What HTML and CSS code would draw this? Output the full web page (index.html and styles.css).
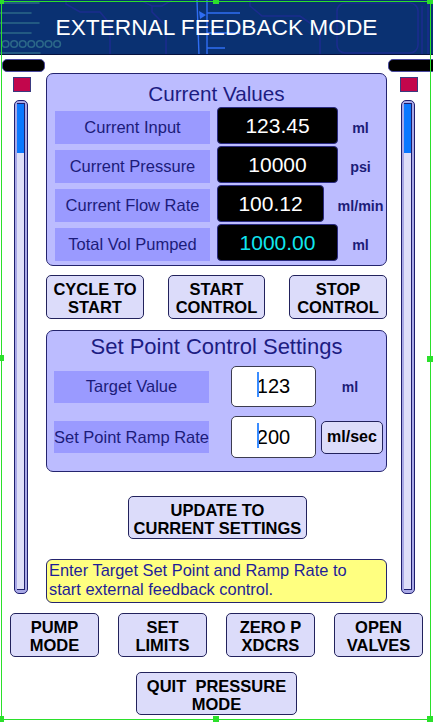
FILE: index.html
```html
<!DOCTYPE html>
<html lang="en">
<head>
<meta charset="utf-8">
<title>External Feedback Mode</title>
<link rel="stylesheet" href="styles.css">
</head>
<body>
<div class="screen">
  <header class="titlebar">
    <svg class="circuit" viewBox="0 0 433 55" width="433" height="55" aria-hidden="true">
      <g fill="none" stroke="#2b6788" stroke-width="1.6" stroke-linecap="round">
        <path d="M-2 3H39M-2 13H31M-2 23H39M-2 33H31M-2 53H40"/>
        <circle cx="5.5" cy="44" r="3.3"/>
        <circle cx="14.1" cy="44" r="3.3"/>
        <circle cx="22.7" cy="44" r="3.3"/>
        <circle cx="31.3" cy="44" r="3.3"/>
        <circle cx="39.9" cy="44" r="3.3"/>
        <circle cx="48.5" cy="44" r="3.3"/>
        <circle cx="57.1" cy="44" r="3.3"/>
      </g>
      <g fill="none" stroke="#1b2c8e" stroke-width="1.6">
        <path d="M66 0V4L80 12H100L110 24V55"/>
        <path d="M140 0L152 6H162L172 0"/>
        <path d="M152 6V12L166 26V55"/>
        <path d="M250 0V6L262 16H300L320 30V55"/>
        <rect x="337" y="3" width="81" height="50" rx="8"/>
        <path d="M422 6V55M428 0V55"/>
      </g>
      <g stroke="#2f6df2" stroke-width="1.4" fill="none">
        <path d="M197 0L199 55M207 0V55M207 13H240M207 33H240M207 48H225"/>
      </g>
      <path d="M199 11L206 15L200 19Z" fill="#2f6df2"/>
    </svg>
    <h1>EXTERNAL FEEDBACK MODE</h1>
  </header>

  <div class="body">
    <aside class="side side-left">
      <div class="pill"></div>
      <div class="led"></div>
      <div class="tube"><div class="track"><div class="fill" style="height:49px"></div></div></div>
    </aside>

    <main class="center">
      <section class="panel values">
        <h2 class="panel-title">Current Values</h2>
        <div class="rows">
          <div class="vrow">
            <div class="label">Current Input</div>
            <div class="value">123.45</div>
            <div class="unit">ml</div>
          </div>
          <div class="vrow">
            <div class="label">Current Pressure</div>
            <div class="value">10000</div>
            <div class="unit">psi</div>
          </div>
          <div class="vrow">
            <div class="label">Current Flow Rate</div>
            <div class="value narrow">100.12</div>
            <div class="unit">ml/min</div>
          </div>
          <div class="vrow">
            <div class="label">Total Vol Pumped</div>
            <div class="value cyan">1000.00</div>
            <div class="unit">ml</div>
          </div>
        </div>
      </section>

      <div class="actions">
        <button class="btn act">CYCLE TO<br>START</button>
        <button class="btn act mid">START<br>CONTROL</button>
        <button class="btn act">STOP<br>CONTROL</button>
      </div>

      <section class="panel setpoint">
        <h2 class="panel-title big">Set Point Control Settings</h2>
        <div class="srow first">
          <div class="label slabel">Target Value</div>
          <div class="input"><span class="caret"></span>123</div>
          <div class="sunit">ml</div>
        </div>
        <div class="srow second">
          <div class="label slabel">Set Point Ramp Rate</div>
          <div class="input"><span class="caret"></span>200</div>
          <button class="btn small">ml/sec</button>
        </div>
      </section>

      <button class="btn update">UPDATE TO<br>CURRENT SETTINGS</button>

      <div class="note">Enter Target Set Point and Ramp Rate to<br>start external feedback control.</div>
    </main>

    <aside class="side side-right">
      <div class="pill"></div>
      <div class="led"></div>
      <div class="tube"><div class="track"><div class="fill" style="height:49px"></div></div></div>
    </aside>
  </div>

  <div class="bottom-row">
    <button class="btn mode">PUMP<br>MODE</button>
    <button class="btn mode">SET<br>LIMITS</button>
    <button class="btn mode">ZERO P<br>XDCRS</button>
    <button class="btn mode">OPEN<br>VALVES</button>
  </div>
  <div class="quit-row">
    <button class="btn quit">QUIT&nbsp; PRESSURE<br>MODE</button>
  </div>

  <div class="selection">
    <div class="sel-frame"></div>
    <span class="handle h-tl"></span>
    <span class="handle h-tm"></span>
    <span class="handle h-tr"></span>
    <span class="handle h-ml"></span>
    <span class="handle h-mr"></span>
    <span class="handle h-bl"></span>
    <span class="handle h-bm"></span>
    <span class="handle h-br"></span>
  </div>
</div>
</body>
</html>
```

FILE: styles.css
```css
* { box-sizing: border-box; margin: 0; padding: 0; }
html, body { width: 433px; height: 723px; overflow: hidden; background: #fff; }
body { font-family: "Liberation Sans", Arial, sans-serif; }

.screen { position: relative; width: 433px; height: 723px; background: #fff; overflow: hidden; }

/* header */
.titlebar {
  position: relative;
  height: 55px;
  background: #0a3172;
  border-bottom: 1px solid #06123f;
  display: flex;
  align-items: center;
  justify-content: center;
  overflow: hidden;
}
.circuit { position: absolute; left: 0; top: 0; width: 433px; height: 55px; }
.titlebar h1 {
  position: relative;
  font-weight: normal;
  font-size: 22.7px;
  line-height: 1;
  color: #fff;
}

/* three columns */
.body {
  display: grid;
  grid-template-columns: 46px 341px 46px;
  height: 548px;
}
.side { display: flex; flex-direction: column; align-items: flex-start; }
.pill {
  margin: 4px 0 0 2px;
  width: 43px;
  height: 13px;
  background: #000;
  border: 1px solid #4a4aa0;
  border-radius: 5px;
}
.side-right .pill { margin-left: 1px; width: 50px; }
.led {
  margin: 5px 0 0 13px;
  width: 18px;
  height: 15px;
  background: #c2064c;
  border: 1px solid #3a3a80;
}
.tube {
  margin: 8px 0 0 14px;
  width: 14px;
  height: 494px;
  border: 1px solid #1e1e6e;
  border-radius: 5px;
  background: #a9a9e6;
  padding: 2px 2px 3px 2px;
}
.side-right .tube { margin-left: 14px; }
.track {
  height: 100%;
  background: #dedef8;
  border-top: 1px solid #1e1e6e;
  border-bottom: 1px solid #1e1e6e;
  border-right: 1px solid #1e1e6e;
}
.fill { background: #0a78ff; }

/* center column */
.center { padding-top: 18px; display: flex; flex-direction: column; align-items: flex-start; }

.panel {
  width: 341px;
  background: #bcbcff;
  border: 1px solid #24246e;
  border-radius: 7px;
}
.panel-title {
  font-weight: normal;
  font-size: 20.7px;
  line-height: 27px;
  padding-top: 6px;
  text-align: center;
  color: #1c1c82;
}
.panel-title.big { font-size: 22px; line-height: 28px; padding-top: 2px; }

.values { padding-bottom: 4px; }
.rows { display: flex; flex-direction: column; gap: 2px; }
.vrow {
  display: grid;
  grid-template-columns: 155px 121px minmax(0, 1fr);
  column-gap: 7px;
  padding-left: 8px;
  height: 37px;
  align-items: end;
}
.label {
  height: 33px;
  background: #9a9aff;
  color: #1c1c7a;
  font-size: 16.5px;
  display: flex;
  align-items: center;
  justify-content: center;
  white-space: nowrap;
}
.value {
  height: 37px;
  background: #000;
  border: 1px solid #2a2a80;
  border-radius: 4px;
  color: #fff;
  font-size: 21px;
  display: flex;
  align-items: center;
  justify-content: center;
}
.value.narrow { width: 107px; }
.value.cyan { color: #10e6ef; }
.unit {
  align-self: stretch;
  min-width: 0;
  display: flex;
  align-items: center;
  justify-content: center;
  padding: 4px 10px 0 0;
  color: #1c1c78;
  font-size: 14.3px;
  font-weight: bold;
  white-space: nowrap;
}

/* buttons */
.btn {
  appearance: none;
  font-family: "Liberation Sans", Arial, sans-serif;
  font-weight: bold;
  font-size: 16.5px;
  line-height: 18px;
  color: #000;
  background: #dcdcfa;
  border: 1px solid #22225c;
  border-radius: 5px;
  text-align: center;
  display: flex;
  align-items: center;
  justify-content: center;
  padding-top: 2px;
  white-space: nowrap;
}
.actions {
  margin-top: 9px;
  width: 341px;
  display: flex;
  justify-content: space-between;
}
.btn.act { width: 98px; height: 44px; }
.btn.act.mid { width: 97px; }

/* set point */
.setpoint { margin-top: 11px; padding-bottom: 13px; }
.srow { display: flex; align-items: center; }
.srow.first { margin-top: 5px; height: 41px; }
.srow.second { margin-top: 9px; height: 42px; }
.slabel { margin-left: 7px; width: 155px; height: 32px; }
.input {
  margin-left: 22px;
  width: 85px;
  height: 100%;
  background: #fff;
  border: 1px solid #3c3c50;
  border-radius: 5px;
  font-size: 20px;
  color: #000;
  display: flex;
  align-items: center;
  justify-content: center;
}
.caret {
  display: inline-block;
  width: 0;
  height: 25px;
  border-left: 2px solid #3a8cff;
  margin-right: -2px;
  position: relative;
  top: -2px;
}
.sunit {
  margin-left: 5px;
  width: 62px;
  padding-right: 4px;
  text-align: center;
  color: #1c1c78;
  font-size: 14px;
  font-weight: bold;
}
.btn.small { margin-left: 5px; width: 62px; height: 33px; font-size: 16px; padding-top: 0; }

.btn.update { margin: 24px 0 0 82px; width: 179px; height: 43px; }

.note {
  margin-top: 20px;
  width: 341px;
  height: 44px;
  background: #ffff80;
  border: 1px solid #24246e;
  border-radius: 6px;
  padding: 1px 2px;
  font-size: 16.4px;
  line-height: 19px;
  color: #1e1e98;
  white-space: nowrap;
}

/* bottom */
.bottom-row { margin-top: 10px; padding-left: 10px; display: flex; gap: 19px; }
.btn.mode { width: 89px; height: 44px; }
.quit-row { margin-top: 15px; padding-left: 136px; display: flex; }
.btn.quit { width: 161px; height: 43px; }

/* selection outline overlay */
.selection { position: absolute; left: 0; top: 0; width: 433px; height: 723px; pointer-events: none; }
.sel-frame {
  position: absolute;
  left: 1px;
  top: 1px;
  width: 430px;
  height: 719px;
  border: 1px solid #2be02b;
}
.handle { position: absolute; width: 6px; height: 6px; background: #2be02b; }
.h-tl { left: -2px; top: -2px; }
.h-tm { left: 213px; top: -2px; }
.h-tr { left: 427px; top: -2px; }
.h-ml { left: -2px; top: 355px; }
.h-mr { left: 427px; top: 356px; }
.h-bl { left: -2px; top: 716px; }
.h-bm { left: 213px; top: 716px; }
.h-br { left: 427px; top: 716px; }
```
